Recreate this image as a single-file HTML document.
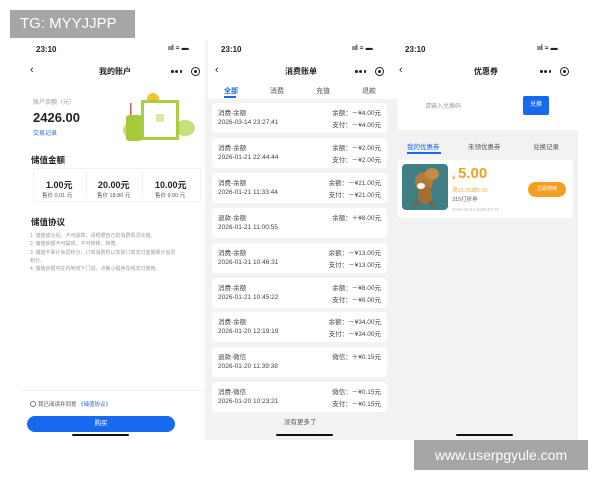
<!DOCTYPE html>
<html><head><meta charset="utf-8"><style>
*{margin:0;padding:0;box-sizing:border-box}
body{width:600px;height:480px;background:#fff;position:relative;overflow:hidden;font-family:"Liberation Sans","Noto Sans CJK SC",sans-serif;color:#222}
.a{position:absolute;white-space:nowrap}
.t{font-size:8px;font-weight:bold}
.s{font-size:6px;color:#777}
.card{position:absolute;left:212px;width:175px;height:30px;background:#fff;border-radius:4px}
.card .l1{position:absolute;left:6px;top:4px;font-size:6.5px;color:#444}
.card .l2{position:absolute;left:6px;top:16px;font-size:6.5px;color:#444}
.card .r1{position:absolute;right:6px;top:4px;font-size:6.5px;color:#444}
.card .r2{position:absolute;right:6px;top:16px;font-size:6.5px;color:#444}
.bar{position:absolute;height:2px;width:57px;background:#111;border-radius:1px}
.dots{position:absolute;width:11px;height:3px}
.dots i{position:absolute;top:0;width:2.5px;height:2.5px;border-radius:50%;background:#222}
.dots i:nth-child(1){left:0}.dots i:nth-child(2){left:4px;width:3px;height:3px;top:-.3px}.dots i:nth-child(3){left:8.5px}
.circ{position:absolute;width:9px;height:9px;border:1.3px solid #222;border-radius:50%}
.circ:after{content:"";position:absolute;left:1.8px;top:1.8px;width:3px;height:3px;border-radius:50%;background:#222}
</style></head><body>
<div class="a" style="left:205px;top:40px;width:3px;height:400px;background:#f3f3f3"></div>
<div class="a" style="left:207px;top:99px;width:191px;height:341px;background:#f2f2f2"></div>
<div class="a" style="left:395px;top:130px;width:183px;height:310px;background:#f2f2f2"></div>

<!-- Panel 1 -->
<div class="a" style="left:36px;top:45px;font-size:8px;font-weight:bold">23:10</div>
<div class="a" style="left:168px;top:45px;font-size:7px;font-weight:bold">ııl ≈ ▬</div>
<div class="a" style="left:30px;top:64px;font-size:11px">‹</div>
<div class="a t" style="left:99px;top:66px">我的账户</div>
<div class="dots" style="left:171px;top:70px"><i></i><i></i><i></i></div>
<div class="circ" style="left:191px;top:67px"></div>
<div class="a s" style="left:33px;top:97px;color:#999">账户余额（元）</div>
<div class="a" style="left:33px;top:110px;font-size:13px;font-weight:bold">2426.00</div>
<div class="a" style="left:33px;top:128px;font-size:6px;color:#2a6de0">交易记录</div>
<svg class="a" style="left:116px;top:90px" width="84" height="55">
<ellipse cx="16" cy="40" rx="9" ry="8" fill="#c5e07a"/>
<ellipse cx="69" cy="38" rx="10" ry="8" fill="#c5e07a"/>
<circle cx="37" cy="9" r="6" fill="#f5c42c"/>
<rect x="10" y="25" width="16" height="26" rx="3" fill="#a5c93a"/>
<rect x="14" y="13" width="1.5" height="12" fill="#d55"/>
<rect x="25" y="10" width="38" height="40" fill="#a8cf3e"/>
<rect x="28" y="13" width="32" height="34" fill="#fff"/>
<rect x="40" y="24" width="8" height="8" fill="#d9eba0"/>
</svg>
<div class="a t" style="left:31px;top:154px;font-size:8.5px">储值金额</div>
<div class="a" style="left:33px;top:168px;width:168px;height:34px;border:1px solid #f2f2f2;border-radius:3px"></div>
<div class="a" style="left:86px;top:172px;width:1px;height:26px;background:#eee"></div>
<div class="a" style="left:142px;top:172px;width:1px;height:26px;background:#eee"></div>
<div class="a" style="left:46px;top:178px;font-size:9px;font-weight:bold">1.00元</div>
<div class="a" style="left:42px;top:191px;font-size:5.5px;color:#555">售价 0.01 元</div>
<div class="a" style="left:98px;top:178px;font-size:9px;font-weight:bold">20.00元</div>
<div class="a" style="left:97px;top:191px;font-size:5.5px;color:#555">售价 18.80 元</div>
<div class="a" style="left:155px;top:178px;font-size:9px;font-weight:bold">10.00元</div>
<div class="a" style="left:155px;top:191px;font-size:5.5px;color:#555">售价 9.00 元</div>
<div class="a t" style="left:31px;top:216px;font-size:8.5px">储值协议</div>
<div class="a" style="left:30px;top:232px;font-size:5px;color:#999;line-height:8.3px">1. 储值成功后，不可退款，请根据自己的消费情况充值。<br>2. 储值余额不可提现，不可转移，转赠。<br>3. 储值不累计会员积分，订单消费时以实际订单支付金额累计会员<br>积分。<br>4. 储值余额可在内地线下门店、点餐小程序在线支付使用。</div>
<div class="a" style="left:22px;top:390px;width:183px;height:1px;background:#eee"></div>
<div class="a" style="left:30px;top:401px;width:6px;height:6px;border:1px solid #777;border-radius:50%"></div>
<div class="a" style="left:38px;top:400px;font-size:5.5px;color:#555">我已阅读并同意 <span style="color:#2a6de0">《储值协议》</span></div>
<div class="a" style="left:27px;top:416px;width:148px;height:16px;background:#1769f0;border-radius:8px;color:#fff;font-size:6.5px;text-align:center;line-height:16px">购买</div>
<div class="bar" style="left:72px;top:434px"></div>

<!-- Panel 2 -->
<div class="a" style="left:221px;top:45px;font-size:8px;font-weight:bold">23:10</div>
<div class="a" style="left:352px;top:45px;font-size:7px;font-weight:bold">ııl ≈ ▬</div>
<div class="a" style="left:215px;top:64px;font-size:11px">‹</div>
<div class="a t" style="left:285px;top:66px">消费账单</div>
<div class="dots" style="left:355px;top:70px"><i></i><i></i><i></i></div>
<div class="circ" style="left:375px;top:67px"></div>
<div class="a" style="left:224px;top:86px;font-size:7px;color:#1769f0;font-weight:bold">全部</div>
<div class="a" style="left:224px;top:96px;width:12px;height:2px;background:#1769f0"></div>
<div class="a" style="left:270px;top:86px;font-size:7px;color:#555">消费</div>
<div class="a" style="left:316px;top:86px;font-size:7px;color:#555">充值</div>
<div class="a" style="left:362px;top:86px;font-size:7px;color:#555">退款</div>
<div class="card" style="top:103px"><div class="l1">消费-余额</div><div class="l2">2026-03-14 23:27:41</div><div class="r1">余额：－¥4.00元</div><div class="r2">支付：－¥4.00元</div></div>
<div class="card" style="top:138px"><div class="l1">消费-余额</div><div class="l2">2026-01-21 22:44:44</div><div class="r1">余额：－¥2.00元</div><div class="r2">支付：－¥2.00元</div></div>
<div class="card" style="top:173px"><div class="l1">消费-余额</div><div class="l2">2026-01-21 11:33:44</div><div class="r1">余额：－¥21.00元</div><div class="r2">支付：－¥21.00元</div></div>
<div class="card" style="top:208px"><div class="l1">退款-余额</div><div class="l2">2026-01-21 11:00:55</div><div class="r1">余额：＋¥8.00元</div></div>
<div class="card" style="top:243px"><div class="l1">消费-余额</div><div class="l2">2026-01-21 10:46:31</div><div class="r1">余额：－¥13.00元</div><div class="r2">支付：－¥13.00元</div></div>
<div class="card" style="top:278px"><div class="l1">消费-余额</div><div class="l2">2026-01-21 10:45:22</div><div class="r1">余额：－¥8.00元</div><div class="r2">支付：－¥8.00元</div></div>
<div class="card" style="top:312px"><div class="l1">消费-余额</div><div class="l2">2026-01-20 12:19:19</div><div class="r1">余额：－¥34.00元</div><div class="r2">支付：－¥34.00元</div></div>
<div class="card" style="top:347px"><div class="l1">退款-微信</div><div class="l2">2026-01-20 11:39:38</div><div class="r1">微信：＋¥0.15元</div></div>
<div class="card" style="top:382px"><div class="l1">消费-微信</div><div class="l2">2026-01-20 10:23:21</div><div class="r1">微信：－¥0.15元</div><div class="r2">支付：－¥0.15元</div></div>
<div class="a" style="left:284px;top:416px;font-size:6.5px;color:#555">没有更多了</div>
<div class="bar" style="left:276px;top:434px"></div>

<!-- Panel 3 -->
<div class="a" style="left:405px;top:45px;font-size:8px;font-weight:bold">23:10</div>
<div class="a" style="left:537px;top:45px;font-size:7px;font-weight:bold">ııl ≈ ▬</div>
<div class="a" style="left:399px;top:64px;font-size:11px">‹</div>
<div class="a t" style="left:474px;top:66px">优惠券</div>
<div class="dots" style="left:540px;top:70px"><i></i><i></i><i></i></div>
<div class="circ" style="left:560px;top:67px"></div>
<div class="a" style="left:425px;top:101px;font-size:6px;color:#999">请输入兑换码</div>
<div class="a" style="left:523px;top:96px;width:26px;height:19px;background:#1769f0;border-radius:2px;color:#fff;font-size:6px;text-align:center;line-height:19px">兑换</div>
<div class="a" style="left:407px;top:141px;font-size:6.5px;color:#1769f0">我的优惠券</div>
<div class="a" style="left:407px;top:152px;width:34px;height:1.5px;background:#1769f0"></div>
<div class="a" style="left:468px;top:141px;font-size:6.5px;color:#555">未领优惠券</div>
<div class="a" style="left:533px;top:141px;font-size:6.5px;color:#555">兑换记录</div>
<div class="a" style="left:398px;top:160px;width:175px;height:58px;background:#fff;border-radius:3px"></div>
<div class="a" style="left:402px;top:164px;width:46px;height:46px;background:#3f7f83;border-radius:4px"></div>
<svg class="a" style="left:404px;top:166px" width="42" height="42"><ellipse cx="20" cy="16" rx="9" ry="10" fill="#b07a3a"/><ellipse cx="28" cy="8" rx="7" ry="6" fill="#c48a48"/><ellipse cx="21" cy="29" rx="7" ry="9" fill="#a46e34"/><ellipse cx="17" cy="20" rx="4" ry="3" fill="#fff"/><path d="M14 36 L10 40 M26 36 L30 40" stroke="#8a5a28" stroke-width="3"/></svg>
<div class="a" style="left:452px;top:176px;font-size:6px;color:#f0a020">¥</div>
<div class="a" style="left:458px;top:165px;font-size:15px;color:#f0a020;font-weight:bold">5.00</div>
<div class="a" style="left:452px;top:186px;font-size:5.5px;color:#f0b040">满10.00减5.00</div>
<div class="a" style="left:452px;top:195px;font-size:5.5px;color:#666">315打折券</div>
<div class="a" style="left:452px;top:207px;font-size:4.5px;color:#bbb">2026-03-14-2026-07-21</div>
<div class="a" style="left:528px;top:182px;width:38px;height:15px;background:#f3a020;border-radius:8px;color:#fff;font-size:5px;text-align:center;line-height:15px">立即使用</div>
<div class="bar" style="left:456px;top:434px"></div>

<div class="a" style="left:10px;top:10px;width:125px;height:28px;background:#a6a6a6;color:#fff;font-size:15px;line-height:28px;padding-left:10px">TG: MYYJJPP</div>
<div class="a" style="left:414px;top:440px;width:174px;height:30px;background:#a6a6a6;color:#fff;font-size:14px;line-height:30px;text-align:center">www.userpgyule.com</div>
</body></html>
